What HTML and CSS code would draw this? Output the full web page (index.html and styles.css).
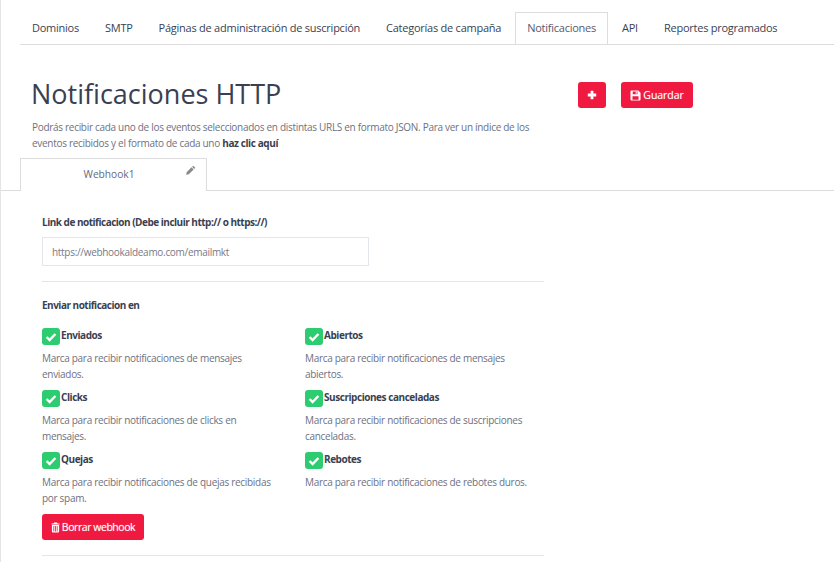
FILE: index.html
```html
<!DOCTYPE html>
<html lang="es">
<head>
<meta charset="utf-8">
<title>Notificaciones HTTP</title>
<link rel="stylesheet" href="styles.css">
</head>
<body>
<div class="page">
  <nav class="tabs">
    <a class="tab">Dominios</a>
    <a class="tab">SMTP</a>
    <a class="tab">Páginas de administración de suscripción</a>
    <a class="tab">Categorías de campaña</a>
    <a class="tab active">Notificaciones</a>
    <a class="tab">API</a>
    <a class="tab">Reportes programados</a>
  </nav>
  <header class="head">
    <div class="intro">
      <h1>Notificaciones HTTP</h1>
      <p>Podrás recibir cada uno de los eventos seleccionados en distintas URLS en formato JSON. Para ver un índice de los eventos recibidos y el formato de cada uno <b>haz clic aquí</b></p>
    </div>
    <div class="actions">
      <button class="btn btn-add" type="button"><svg class="ico" viewBox="0 0 10 10"><path d="M3.6 0.8h2.8v2.8h2.8v2.8H6.4v2.8H3.6V6.4H0.8V3.6h2.8z"/></svg></button>
      <button class="btn btn-save" type="button"><svg class="ico" viewBox="0 0 12 12"><path fill-rule="evenodd" d="M1.5 0.5h7.5l2.5 2.5v7.2a1.3 1.3 0 0 1-1.3 1.3H1.8a1.3 1.3 0 0 1-1.3-1.3V1.5a1 1 0 0 1 1-1zM3 1.6v3h5.2v-3zM6.2 2h1.2v2.2H6.2zM2.7 6.8v3.8h6.6V6.8z"/></svg>Guardar</button>
    </div>
  </header>
  <div class="hook-tabs">
    <div class="hook-tab">Webhook1<svg class="pencil" viewBox="0 0 12 12"><path d="M8.6 0.8l2.6 2.6-1.3 1.3-2.6-2.6zM6.6 2.8l2.6 2.6-5.8 5.8-3.2 0.6 0.6-3.2z"/></svg></div>
  </div>
  <main class="form">
    <label class="lbl" for="url">Link de notificacion (Debe incluir http:// o https://)</label>
    <input class="url" id="url" type="text" placeholder="https://webhookaldeamo.com/emailmkt">
    <hr class="rule rule-top">
    <div class="lbl send">Enviar notificacion en</div>
    <div class="events">
      <div class="event">
        <div class="ev-title"><span class="check"><svg viewBox="0 0 12 10"><path d="M1.6 5l3 3 5.8-6"/></svg></span><span class="ev-name">Enviados</span></div>
        <p>Marca para recibir notificaciones de mensajes enviados.</p>
      </div>
      <div class="event">
        <div class="ev-title"><span class="check"><svg viewBox="0 0 12 10"><path d="M1.6 5l3 3 5.8-6"/></svg></span><span class="ev-name">Abiertos</span></div>
        <p>Marca para recibir notificaciones de mensajes abiertos.</p>
      </div>
      <div class="event">
        <div class="ev-title"><span class="check"><svg viewBox="0 0 12 10"><path d="M1.6 5l3 3 5.8-6"/></svg></span><span class="ev-name">Clicks</span></div>
        <p>Marca para recibir notificaciones de clicks en mensajes.</p>
      </div>
      <div class="event">
        <div class="ev-title"><span class="check"><svg viewBox="0 0 12 10"><path d="M1.6 5l3 3 5.8-6"/></svg></span><span class="ev-name">Suscripciones canceladas</span></div>
        <p>Marca para recibir notificaciones de suscripciones canceladas.</p>
      </div>
      <div class="event">
        <div class="ev-title"><span class="check"><svg viewBox="0 0 12 10"><path d="M1.6 5l3 3 5.8-6"/></svg></span><span class="ev-name">Quejas</span></div>
        <p>Marca para recibir notificaciones de quejas recibidas por spam.</p>
      </div>
      <div class="event">
        <div class="ev-title"><span class="check"><svg viewBox="0 0 12 10"><path d="M1.6 5l3 3 5.8-6"/></svg></span><span class="ev-name">Rebotes</span></div>
        <p>Marca para recibir notificaciones de rebotes duros.</p>
      </div>
    </div>
    <button class="btn btn-del" type="button"><svg class="ico" viewBox="0 0 10 12"><path fill-rule="evenodd" d="M3.4 0.4h3.2l0.7 1.2h2.2v1.1H0.5V1.6h2.2zM1 3.2h8v7.2a1.2 1.2 0 0 1-1.2 1.2H2.2A1.2 1.2 0 0 1 1 10.4zM2.7 4.4v6h0.9v-6zM4.6 4.4v6h0.9v-6zM6.4 4.4v6h0.9v-6z"/></svg>Borrar webhook</button>
    <hr class="rule rule-bottom">
  </main>
</div>
</body>
</html>
```
FILE: styles.css
```css
* { box-sizing: border-box; }
html, body { margin: 0; height: 100%; overflow: hidden; background: #fff; }
body {
  font-family: "Open Sans", "Liberation Sans", sans-serif;
  color: #3a3f51;
}
.page {
  min-height: 562px;
  border-left: 1px solid #e4e4e4;
  padding-top: 12px;
}
.tabs {
  display: flex;
  gap: 2px;
  margin-left: 19px;
  border-bottom: 1px solid #ddd;
  height: 33px;
}
.tab {
  height: 33px;
  padding: 0 11px;
  border: 1px solid transparent;
  border-bottom: 0;
  font-size: 11px;
  letter-spacing: -0.245px;
  line-height: 30px;
  color: #3a3f51;
  white-space: nowrap;
}
.tab.active {
  border-color: #ddd;
  background: #fff;
  color: #555a6e;
  height: 32px;
}
.head {
  display: flex;
  align-items: flex-start;
  padding-left: 31px;
}
.intro { width: 510px; }
h1 {
  margin: 30px 0 0 -1px;
  font-size: 27px;
  line-height: 38px;
  font-weight: 400;
  color: #3a3f51;
}
.intro p {
  margin: 6px 0 0;
  font-size: 10px;
  letter-spacing: -0.3px;
  line-height: 16px;
  color: #6e717f;
}
.intro b { font-weight: 700; letter-spacing: -0.4px; color: #3a3f51; }
.actions {
  display: flex;
  gap: 15px;
  margin: 37px 0 0 36px;
}
.btn {
  display: inline-flex;
  align-items: center;
  justify-content: center;
  gap: 2px;
  height: 26px;
  padding: 0;
  border: 0;
  border-radius: 3px;
  background: #f0193f;
  color: #fff;
  font-family: inherit;
  font-size: 10.5px;
  font-weight: 400;
  text-shadow: 0 0 1px rgba(255, 255, 255, 0.5);
}
.btn-add { width: 28px; }
.btn-save { width: 72px; letter-spacing: -0.05px; }
.ico { width: 10px; height: 10px; fill: #fff; flex: none; }
.btn-save .ico { width: 11px; height: 11px; }
.hook-tabs {
  display: flex;
  margin-top: 7px;
  height: 33px;
  padding-left: 19px;
  border-bottom: 1px solid #ddd;
}
.hook-tab {
  position: relative;
  width: 187px;
  height: 33px;
  padding-right: 9px;
  border: 1px solid #ddd;
  border-bottom: 0;
  background: #fff;
  text-align: center;
  font-size: 10.2px;
  line-height: 31px;
  color: #66697c;
}
.pencil {
  position: absolute;
  top: 6px;
  right: 10px;
  width: 10px;
  height: 10px;
  fill: #8a8a8a;
}
.form {
  width: 544px;
  padding: 24px 0 0 41px;
}
.lbl {
  display: block;
  font-size: 10px;
  letter-spacing: -0.5px;
  font-weight: 700;
  line-height: 15px;
  color: #3a3f51;
}
.url {
  display: block;
  width: 327px;
  height: 29px;
  margin-top: 7px;
  padding: 0 9px;
  border: 1px solid #e3e6ea;
  border-radius: 0;
  outline: 0;
  font-family: inherit;
  font-size: 10px;
  letter-spacing: -0.3px;
}
.url::placeholder { color: #777a88; opacity: 1; }
.rule {
  margin: 0;
  border: 0;
  border-top: 1px solid #e6e6e6;
  width: 502px;
}
.rule-top { margin-top: 15px; }
.send { margin-top: 16px; }
.events {
  display: grid;
  grid-template-columns: 263px 239px;
  grid-auto-rows: 62px;
  margin-top: 15px;
}
.ev-title {
  display: flex;
  align-items: flex-start;
  gap: 1px;
  height: 17px;
  font-size: 10px;
  letter-spacing: -0.45px;
  font-weight: 700;
  color: #3a3f51;
}
.ev-name { line-height: 15px; }
.check {
  display: flex;
  align-items: center;
  justify-content: center;
  width: 18px;
  height: 17px;
  border-radius: 3px;
  background: #2ecc71;
}
.check svg {
  width: 12px;
  height: 10px;
  fill: none;
  stroke: #fff;
  stroke-width: 2.4;
}
.event p {
  max-width: 232px;
  margin: 5px 0 0;
  font-size: 10px;
  letter-spacing: -0.3px;
  line-height: 16px;
  color: #6e717f;
}
.btn-del {
  display: flex;
  width: 102px;
  letter-spacing: -0.45px;
}
.btn-del .ico { height: 11px; width: 9px; }
.rule-bottom { margin-top: 15px; }
```
